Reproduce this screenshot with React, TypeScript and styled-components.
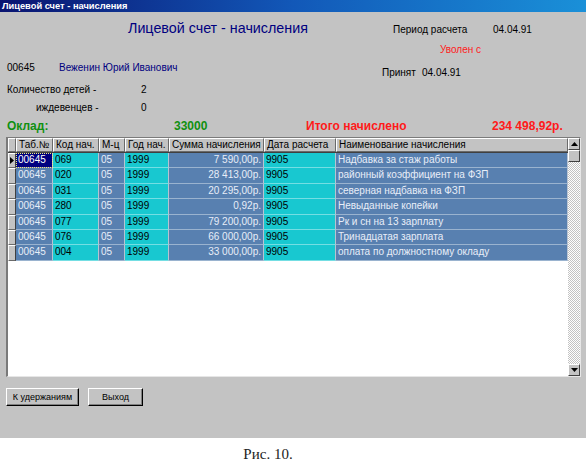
import React from "react";
import styled, { createGlobalStyle } from "styled-components";

const Global = createGlobalStyle`
  html, body { margin: 0; padding: 0; background: #fff; }
  body { width: 586px; height: 471px; overflow: hidden; font-family: "Liberation Sans", Arial, sans-serif; }
`;

const Page = styled.div`
  width: 586px;
  display: flex;
  flex-direction: column;
`;

const Window = styled.div`
  height: 438px;
  background: #c3c3c3;
  display: flex;
  flex-direction: column;
`;

const TitleBar = styled.div`
  height: 12px;
  background: linear-gradient(90deg, #0a1470 0%, #1258b8 50%, #1a90d8 100%);
  color: #fff;
  font-weight: bold;
  font-size: 9.3px;
  line-height: 12px;
  padding-left: 2px;
  white-space: nowrap;
`;

const Body = styled.div`
  padding: 8px 0 0 7px;
  display: flex;
  flex-direction: column;
`;

const InfoRow = styled.div<{ $h: number }>`
  height: ${(p) => p.$h}px;
  display: flex;
  align-items: flex-start;
`;

const Slot = styled.div<{
  $w?: number;
  $top?: number;
  $color?: string;
  $size?: number;
  $bold?: boolean;
}>`
  flex: none;
  width: ${(p) => (p.$w ? `${p.$w}px` : "auto")};
  margin-top: ${(p) => p.$top ?? 0}px;
  color: ${(p) => p.$color ?? "#000"};
  font-size: ${(p) => p.$size ?? 10}px;
  font-weight: ${(p) => (p.$bold ? "bold" : "normal")};
  line-height: ${(p) => Math.round((p.$size ?? 10) * 1.2)}px;
  white-space: nowrap;
`;

const GridFrame = styled.div`
  margin-top: 1px;
  margin-right: 5px;
  height: 240px;
  display: flex;
  border-left: 2px solid #7a7a7a;
  border-top: 1px solid #7a7a7a;
  border-bottom: 1px solid #e6e6e6;
  border-right: 1px solid #e6e6e6;
  background: #fff;
  box-sizing: border-box;
  margin-left: -1px;
`;

const DataArea = styled.div`
  flex: 1;
  display: flex;
  flex-direction: column;
  background: #fff;
`;

const cols = "8px 37px 46px 26px 44px 95px 72px 232px";

const HeaderRow = styled.div`
  display: grid;
  grid-template-columns: ${cols};
  height: 15px;
  border-bottom: 1px solid #404040;
  box-sizing: border-box;
`;

const HeadCell = styled.div`
  background: #c3c3c3;
  border-top: 1px solid #fff;
  border-left: 1px solid #fff;
  border-right: 1px solid #6a6a6a;
  border-bottom: 1px solid #6a6a6a;
  font-size: 10px;
  line-height: 12px;
  padding-left: 2px;
  white-space: nowrap;
  overflow: hidden;
  box-sizing: border-box;
`;

const DataRow = styled.div`
  display: grid;
  grid-template-columns: ${cols};
  height: 15.4px;
`;

const Indicator = styled.div`
  background: #c3c3c3;
  border-top: 1px solid #fff;
  border-left: 1px solid #fff;
  border-right: 1px solid #404040;
  border-bottom: 1px solid #6a6a6a;
  box-sizing: border-box;
  display: flex;
  align-items: center;
  justify-content: center;
`;

const Cell = styled.div<{ $cyan?: boolean; $right?: boolean; $selected?: boolean }>`
  background: ${(p) => (p.$selected ? "#000080" : p.$cyan ? "#18c8d0" : "#5880b0")};
  color: ${(p) => (p.$selected ? "#fff" : p.$cyan ? "#000" : "#e8eef8")};
  border-right: 1px solid #b8c2d0;
  border-bottom: 1px solid rgba(255, 255, 255, 0.4);
  outline: ${(p) => (p.$selected ? "1px dotted #f0f080" : "none")};
  outline-offset: -1px;
  font-size: 10px;
  line-height: 14px;
  padding: 0 2px;
  text-align: ${(p) => (p.$right ? "right" : "left")};
  white-space: nowrap;
  overflow: hidden;
  box-sizing: border-box;
`;

const Scrollbar = styled.div`
  width: 12px;
  display: flex;
  flex-direction: column;
  background-color: #c3c3c3;
  background-image: conic-gradient(#fff 25%, #c3c3c3 0 50%, #fff 0 75%, #c3c3c3 0);
  background-size: 2px 2px;
`;

const ScrollButton = styled.div`
  width: 12px;
  height: 12px;
  box-sizing: border-box;
  background: #c3c3c3;
  border-top: 1px solid #fff;
  border-left: 1px solid #fff;
  border-right: 1px solid #404040;
  border-bottom: 1px solid #404040;
  display: flex;
  align-items: center;
  justify-content: center;
`;

const Track = styled.div`
  flex: 1;
`;

const ButtonRow = styled.div`
  margin-top: 11px;
  display: flex;
  gap: 9px;
  margin-left: -1px;
`;

const Button = styled.button<{ $w: number }>`
  width: ${(p) => p.$w}px;
  height: 18px;
  padding: 0;
  background: #c3c3c3;
  border-top: 1px solid #fff;
  border-left: 1px solid #fff;
  border-right: 1px solid #000;
  border-bottom: 1px solid #000;
  box-shadow: inset -1px -1px 0 #808080;
  font-family: "Liberation Sans", Arial, sans-serif;
  font-size: 9px;
  color: #000;
`;

const Caption = styled.div`
  height: 33px;
  display: flex;
  align-items: center;
  justify-content: center;
  padding-right: 50px;
  font-family: "Liberation Serif", "Times New Roman", serif;
  font-size: 15px;
  color: #222;
`;

const Arrow = ({ dir }: { dir: "up" | "down" | "right" }) => {
  if (dir === "right")
    return (
      <svg width="4" height="7" viewBox="0 0 4 7">
        <polygon points="0,0 4,3.5 0,7" fill="#000" />
      </svg>
    );
  return (
    <svg width="7" height="4" viewBox="0 0 7 4">
      <polygon points={dir === "up" ? "3.5,0 7,4 0,4" : "0,0 7,0 3.5,4"} fill="#000" />
    </svg>
  );
};

const headers = [
  "Таб.№",
  "Код нач.",
  "М-ц",
  "Год нач.",
  "Сумма начисления",
  "Дата расчета",
  "Наименование начисления",
];

const rows = [
  ["00645", "069", "05", "1999", "7 590,00р.", "9905", "Надбавка за стаж работы"],
  ["00645", "020", "05", "1999", "28 413,00р.", "9905", "районный коэффициент на ФЗП"],
  ["00645", "031", "05", "1999", "20 295,00р.", "9905", "северная надбавка на ФЗП"],
  ["00645", "280", "05", "1999", "0,92р.", "9905", "Невыданные копейки"],
  ["00645", "077", "05", "1999", "79 200,00р.", "9905", "Рк и сн на 13 зарплату"],
  ["00645", "076", "05", "1999", "66 000,00р.", "9905", "Тринадцатая зарплата"],
  ["00645", "004", "05", "1999", "33 000,00р.", "9905", "оплата по должностному окладу"],
];

const cyanCols = [1, 3, 5];

export default function App() {
  return (
    <Page>
      <Global />
      <Window>
        <TitleBar>Лицевой счет - начисления</TitleBar>
        <Body>
          <InfoRow $h={20}>
            <Slot $w={121} />
            <Slot $w={265} $size={14.3} $color="#000080" $top={0}>
              Лицевой счет - начисления
            </Slot>
            <Slot $w={100} $top={4}>
              Период расчета
            </Slot>
            <Slot $top={4}>04.04.91</Slot>
          </InfoRow>
          <InfoRow $h={20}>
            <Slot $w={433} />
            <Slot $color="#ff2020" $top={4}>
              Уволен с
            </Slot>
          </InfoRow>
          <InfoRow $h={20}>
            <Slot $w={52} $top={2}>
              00645
            </Slot>
            <Slot $w={323} $top={2} $color="#000080">
              Веженин Юрий Иванович
            </Slot>
            <Slot $w={40} $top={7}>
              Принят
            </Slot>
            <Slot $top={7}>04.04.91</Slot>
          </InfoRow>
          <InfoRow $h={19}>
            <Slot $w={134} $top={4}>
              Количество детей -
            </Slot>
            <Slot $top={4}>2</Slot>
          </InfoRow>
          <InfoRow $h={18}>
            <Slot $w={29} />
            <Slot $w={105} $top={3}>
              иждевенцев -
            </Slot>
            <Slot $top={3}>0</Slot>
          </InfoRow>
          <InfoRow $h={19}>
            <Slot $w={167} $size={12} $bold $color="#109010" $top={2}>
              Оклад:
            </Slot>
            <Slot $w={132} $size={12} $bold $color="#109010" $top={2}>
              33000
            </Slot>
            <Slot $w={186} $size={12} $bold $color="#ff1a1a" $top={2}>
              Итого начислено
            </Slot>
            <Slot $size={12} $bold $color="#ff1a1a" $top={2}>
              234 498,92р.
            </Slot>
          </InfoRow>
          <GridFrame>
            <DataArea>
              <HeaderRow>
                <HeadCell />
                {headers.map((h) => (
                  <HeadCell key={h}>{h}</HeadCell>
                ))}
              </HeaderRow>
              {rows.map((r, i) => (
                <DataRow key={i}>
                  <Indicator>{i === 0 && <Arrow dir="right" />}</Indicator>
                  {r.map((v, c) => (
                    <Cell
                      key={c}
                      $cyan={cyanCols.includes(c)}
                      $right={c === 4}
                      $selected={i === 0 && c === 0}
                    >
                      {v}
                    </Cell>
                  ))}
                </DataRow>
              ))}
            </DataArea>
            <Scrollbar>
              <ScrollButton>
                <Arrow dir="up" />
              </ScrollButton>
              <ScrollButton />
              <Track />
              <ScrollButton>
                <Arrow dir="down" />
              </ScrollButton>
            </Scrollbar>
          </GridFrame>
          <ButtonRow>
            <Button $w={73}>К удержаниям</Button>
            <Button $w={55}>Выход</Button>
          </ButtonRow>
        </Body>
      </Window>
      <Caption>Рис. 10.</Caption>
    </Page>
  );
}
